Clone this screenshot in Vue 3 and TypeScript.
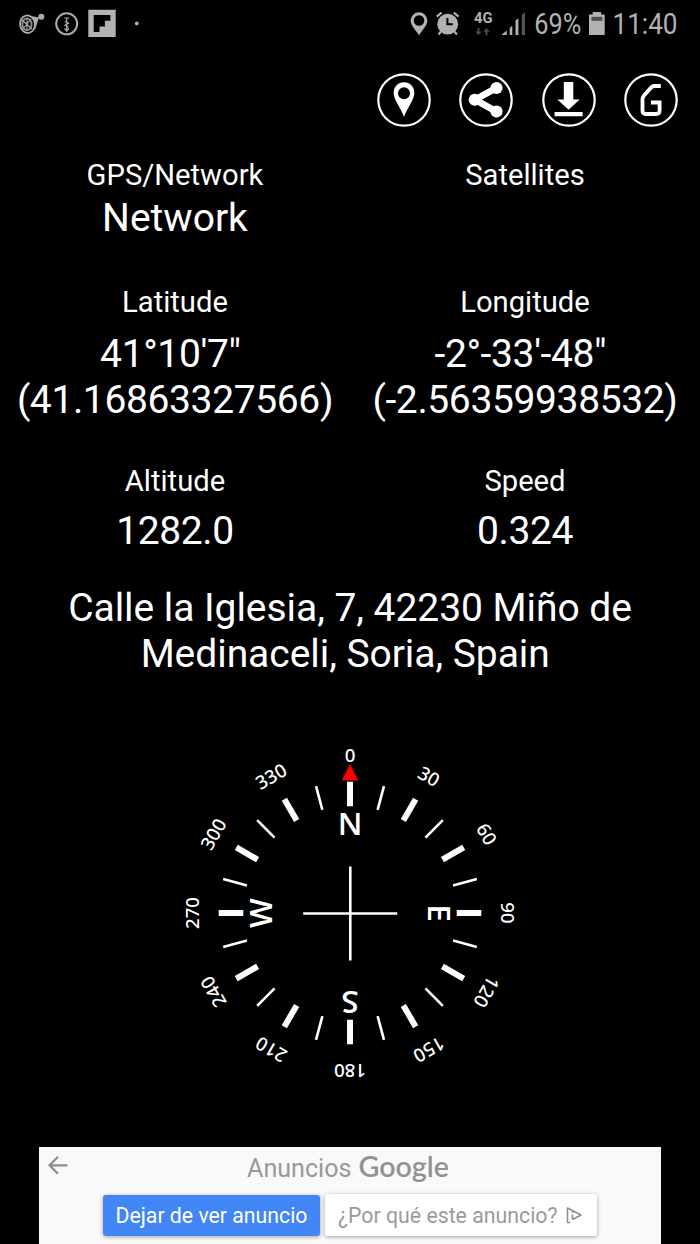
<script setup lang="ts">
interface Tick { angle: number; major: boolean }
interface Cardinal { letter: string; angle: number }

const ticks: Tick[] = Array.from({ length: 24 }, (_, i) => ({ angle: i * 15, major: i % 2 === 0 }))
const degrees: number[] = Array.from({ length: 12 }, (_, i) => i * 30)
const cardinals: Cardinal[] = [
  { letter: 'N', angle: 0 },
  { letter: 'E', angle: 90 },
  { letter: 'S', angle: 180 },
  { letter: 'W', angle: 270 },
]
</script>

<template>
  <div class="screen">
    <header class="status">
      <svg width="150" height="48" viewBox="0 0 150 48">
        <g fill="none" stroke="#adadad">
          <path d="M31 16L39 17.5L35 30Z" fill="#adadad" stroke="none" />
          <ellipse cx="27.5" cy="24.2" rx="7.4" ry="8.8" fill="#000" stroke-width="1.8" transform="rotate(-10 27.5 24.2)" />
          <ellipse cx="27" cy="24.3" rx="4.6" ry="6" stroke-width="1.8" stroke="#8d8d8d" />
          <path d="M22 20l10 9M31 19l-8 10M27 18v12" stroke-width="1.1" />
          <circle cx="41.3" cy="16.7" r="3" fill="#adadad" stroke="none" />
          <circle cx="66.7" cy="23.8" r="10.5" stroke-width="2" />
          <path d="M64.3 18h4.8M66.7 18v12.5M64.8 21.5l3.8 1.8l-3.6 2l3.4 1.8M64.5 28.5l2.2 2.5l2.2-2.5" stroke-width="1.2" />
        </g>
        <path fill="#b2b2b2" fill-rule="evenodd" d="M88.3 9.7h27.4V37H88.3zM93.7 15v17h5.8v-5.6h5.4v-5.6h5.5V15z" />
        <circle cx="136.8" cy="23.4" r="1.9" fill="#b2b2b2" />
      </svg>
      <svg width="300" height="48" viewBox="400 0 300 48">
        <g fill="#b2b2b2">
          <path fill-rule="evenodd" d="M419 12.2a8.4 8.4 0 0 1 8.4 8.4c0 5-5 9.4-8.4 14.8c-3.4-5.4-8.4-9.800-8.4-14.800a8.400 8.400 0 0 1 8.400-8.400zm0 3a5.300 5.300 0 1 0 0 10.600a5.300 5.300 0 0 0 0-10.600z" />
          <circle cx="447.700" cy="24.200" r="10.400" />
          <path d="M436.800 16.600l4.800-4M458.600 16.600l-4.800-4M441 31.500l-2.500 3M454.400 31.500l2.500 3" stroke="#b2b2b2" stroke-width="2.100" />
          <path d="M447.400 18v6.200h5.400" fill="none" stroke="#000" stroke-width="2" />
          <text class="net" x="474" y="23.200" textLength="18.500" lengthAdjust="spacingAndGlyphs">4G</text>
          <path fill="#484848" d="M477.500 28h2v3.500h2.200l-3.200 3.800l-3.200-3.800h2.200zM485.500 35.300h2v-3.500h2.200l-3.200-3.800l-3.200 3.800h2.200z" />
          <path d="M501.300 35l5.400-4.500V35zM509.700 28l2.600-2.300V35h-2.600zM515.500 20.500l2.900-2.200V35h-2.900z" />
          <path fill="#545454" d="M521.800 14.800l3.200-2.500V35h-3.200z" />
          <text class="stat" x="534.300" y="33.800" textLength="47" lengthAdjust="spacingAndGlyphs">69%</text>
          <path d="M592.700 12h8.400v2.600h3.600V35H589V14.600h3.700z" />
          <path fill="#505050" d="M591.500 16.800h10.800v4h-10.800z" />
          <text class="stat" x="612.500" y="33.800" textLength="65" lengthAdjust="spacingAndGlyphs">11:40</text>
        </g>
      </svg>
    </header>

    <nav class="actions">
      <svg class="action" viewBox="0 0 54 54">
        <circle class="ring" cx="27" cy="27" r="25.700" />
        <path fill="#fff" fill-rule="evenodd" d="M27 9.300c6 0 10.300 4.300 10.300 10.600c0 7-7 14.500-10.300 24.100c-3.300-9.600-10.300-17.100-10.300-24.100c0-6.300 4.300-10.600 10.300-10.600zm0 5a6 6 0 1 0 0 12a6 6 0 0 0 0-12z" />
      </svg>
      <svg class="action" viewBox="0 0 54 54">
        <circle class="ring" cx="27" cy="27" r="25.700" />
        <path d="M37.300 15L16 26.700L37.300 38.500" fill="none" stroke="#fff" stroke-width="6.600" />
        <g fill="#fff"><circle cx="15.700" cy="26.700" r="6" /><circle cx="37.500" cy="15" r="6.100" /><circle cx="37.500" cy="38.500" r="6.100" /></g>
      </svg>
      <svg class="action" viewBox="0 0 54 54">
        <circle class="ring" cx="27" cy="27" r="25.700" />
        <path fill="#fff" d="M21.800 9h9.500v17.600h6.400L26.600 36.700L15.400 26.600h6.400zM12.600 39h28v4.200h-28z" />
      </svg>
      <svg class="action" viewBox="0 0 54 54">
        <circle class="ring" cx="27" cy="27" r="25.700" />
        <path d="M36.800 13H30.500Q28.500 13 27 14.600L20 22.400Q18.500 24 18.500 26.500V37.500Q18.500 41 22 41H32Q35.600 41 35.600 37.500V29.500H27" fill="none" stroke="#fff" stroke-width="3.800" />
      </svg>
    </nav>

    <main>
      <section class="row source">
        <div><h2>GPS/Network</h2><p>Network</p></div>
        <div><h2>Satellites</h2></div>
      </section>
      <section class="row coords">
        <div><h2>Latitude</h2><p>41°10'7"&nbsp;<br>(41.16863327566)</p></div>
        <div><h2>Longitude</h2><p>-2°-33'-48"&nbsp;<br>(-2.56359938532)</p></div>
      </section>
      <section class="row motion">
        <div><h2>Altitude</h2><p>1282.0</p></div>
        <div><h2>Speed</h2><p>0.324</p></div>
      </section>
      <p class="address">Calle la Iglesia, 7, 42230 Miño de<br>Medinaceli, Soria, Spain&nbsp;</p>
    </main>

    <svg class="compass" viewBox="-175 -175 350 350">
      <line
        v-for="t in ticks" :key="t.angle" x1="0" x2="0" y1="-131.300" y2="-106.700"
        :class="t.major ? 'major' : 'minor'" :transform="`rotate(${t.angle})`"
      />
      <text v-for="d in degrees" :key="d" class="degree" y="-151" :transform="`rotate(${d})`">{{ d }}</text>
      <text v-for="c in cardinals" :key="c.letter" class="cardinal" y="-78" :transform="`rotate(${c.angle})`">{{ c.letter }}</text>
      <path class="cross" d="M0.300 -46.500V47.500M-46.800 0.500H47.200" />
      <path d="M0 -149L8.200 -132.500H-8.200Z" fill="#f00" />
    </svg>

    <footer class="ad">
      <div class="ad-head">
        <svg width="622" height="44" viewBox="39 1147 622 44">
          <path d="M67.500 1165.300H50M58 1156.800L49.500 1165.300L58 1173.800" fill="none" stroke="#8e8e8e" stroke-width="2.200" />
          <text class="ads" x="247" y="1176.500" textLength="104.500" lengthAdjust="spacingAndGlyphs">Anuncios</text>
          <text class="google" x="358.500" y="1176.500" textLength="90.500" lengthAdjust="spacingAndGlyphs">Google</text>
        </svg>
      </div>
      <div class="ad-buttons">
        <button class="stop">
          <svg width="217" height="41">
            <text x="12.500" y="27.700" fill="#fff" textLength="192" lengthAdjust="spacingAndGlyphs">Dejar de ver anuncio</text>
          </svg>
        </button>
        <button class="why">
          <svg width="272" height="42">
            <text x="13" y="28.700" fill="#9b9b9b" textLength="219.500" lengthAdjust="spacingAndGlyphs">¿Por qué este anuncio?</text>
            <path d="M245.500 28.500L242.500 28.500V14L256 21L247.500 25.500" fill="none" stroke="#8f8f8f" stroke-width="1.600" stroke-linejoin="round" />
            <path d="M247.500 17.500v1.500M247.500 20.500v5" stroke="#8f8f8f" stroke-width="1.600" />
          </svg>
        </button>
      </div>
    </footer>
  </div>
</template>

<style>
body { margin: 0; background: #000; }
</style>

<style scoped>
.screen {
  width: 700px;
  height: 1244px;
  overflow: hidden;
  display: flex;
  flex-direction: column;
  background: #000;
  color: #fff;
  font-family: Roboto, "Liberation Sans", sans-serif;
}
svg { display: block; flex: none; }
.status { display: flex; justify-content: space-between; height: 48px; flex: none; }
.stat { font-size: 29px; }
.net { font-size: 14px; font-weight: 700; }
.actions { display: flex; justify-content: flex-end; gap: 28.500px; padding: 25px 21.900px 0.500px 0; flex: none; }
.action { width: 54px; height: 54px; }
.ring { fill: none; stroke: #fff; stroke-width: 2.200; }
main { flex: none; height: 557.500px; padding-top: 30px; box-sizing: border-box; }
.row { display: grid; grid-template-columns: 1fr 1fr; text-align: center; }
h2, p { margin: 0; font-weight: 400; white-space: nowrap; }
h2 { font-size: 29.200px; line-height: 34px; }
p { font-size: 39px; line-height: 45.700px; }
.source { height: 127.500px; }
.source p { margin-top: 4px; }
.coords { height: 179px; }
.coords p { margin-top: 13px; letter-spacing: -0.370px; }
.motion { height: 122px; }
.motion p { margin-top: 11px; letter-spacing: -0.370px; }
.address { text-align: center; letter-spacing: -0.050px; }
.compass { width: 350px; height: 350px; margin: 53px 0 0 175px; }
.major { stroke: #fff; stroke-width: 6; }
.minor { stroke: #fff; stroke-width: 2.600; }
.cross { stroke: #fff; stroke-width: 2.600; }
.degree { fill: #fff; font: 500 18.700px "Noto Sans", sans-serif; text-anchor: middle; }
.cardinal { fill: #fff; font: 600 31.500px "Open Sans", sans-serif; text-anchor: middle; }
.ad { width: 622px; margin: auto 39px 0; height: 97px; flex: none; background: #f9f9f9; }
.ad-head { height: 47px; }
.ads { font-size: 25.500px; fill: #999; }
.google { font: 600 29px Lato, sans-serif; fill: #929292; }
.ad-buttons { display: flex; align-items: flex-end; gap: 5px; padding-left: 64px; height: 42px; }
button { border: 0; padding: 0; border-radius: 3px; font: 21.800px Roboto, sans-serif; box-shadow: 0 1px 4px rgba(0, 0, 0, .35); }
.stop { background: #4285f4; }
.why { background: #fff; }
</style>
